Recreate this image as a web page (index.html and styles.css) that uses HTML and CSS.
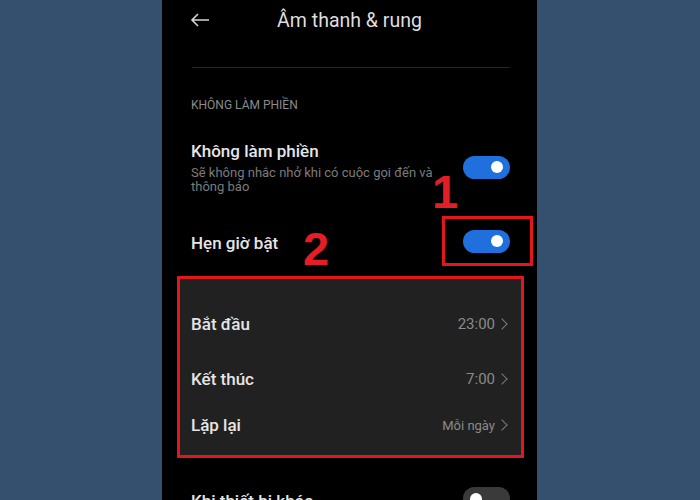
FILE: index.html
```html
<!DOCTYPE html>
<html lang="vi">

<head>
    <meta charset="UTF-8">
    <meta name="viewport" content="width=device-width, initial-scale=1.0">
    <title>Âm thanh &amp; rung</title>
    <link rel="stylesheet" href="styles.css">
</head>

<body>
    <div class="phone">
        <!-- thanh tiêu đề -->
        <div class="header">
            <span class="back">
                <svg width="20" height="14" viewBox="0 0 20 14"><path d="M19 7H2M8 1L2 7l6 6" fill="none" stroke="#d6d6d6" stroke-width="1.6"/></svg>
            </span>
            <span class="title">Âm thanh &amp; rung</span>
            <span></span>
        </div>
        <div class="divider"></div>

        <div class="label">KHÔNG LÀM PHIỀN</div>

        <div class="row row-first">
            <div class="text">
                <div class="name">Không làm phiền</div>
                <div class="desc">Sẽ không nhắc nhở khi có cuộc gọi đến và thông báo</div>
            </div>
            <span class="toggle on"></span>
        </div>

        <div class="row row-timer">
            <div class="name">Hẹn giờ bật</div>
            <span class="toggle on"></span>
        </div>

        <div class="card">
            <div class="item item-start">
                <span class="name">Bắt đầu</span>
                <span class="value">23:00 <i class="chev"></i></span>
            </div>
            <div class="item item-end">
                <span class="name">Kết thúc</span>
                <span class="value">7:00 <i class="chev"></i></span>
            </div>
            <div class="item item-repeat">
                <span class="name">Lặp lại</span>
                <span class="value">Mỗi ngày <i class="chev"></i></span>
            </div>
        </div>

        <div class="row row-lock">
            <div class="name">Khi thiết bị khóa</div>
            <span class="toggle"></span>
        </div>

        <!-- chú thích màu đỏ -->
        <span class="mark mark1">1</span>
        <span class="mark mark2">2</span>
        <span class="redbox"></span>
    </div>
</body>

</html>
```

FILE: styles.css
```css
* {
    margin: 0;
    padding: 0;
    box-sizing: border-box;
}

body {
    width: 700px;
    height: 500px;
    overflow: hidden;
    background: #34506e;
    font-family: Roboto, "Noto Sans", sans-serif;
}

.phone {
    position: relative;
    width: 375px;
    height: 500px;
    margin-left: 162px;
    background: #000;
    overflow: hidden;
}

.header {
    height: 40px;
    display: grid;
    grid-template-columns: 1fr auto 1fr;
    align-items: center;
    padding: 0 28px;
}

.back {
    display: flex;
}

.title {
    color: #dedede;
    font-size: 19.5px;
}

.divider {
    height: 1px;
    margin: 27px 27px 0 30px;
    background: #262626;
}

.label {
    margin: 29px 29px 0;
    color: #8a8a8a;
    font-size: 12px;
    line-height: 16px;
}

.row {
    display: flex;
    align-items: center;
    justify-content: space-between;
    padding: 0 27px 0 29px;
}

.name {
    color: #e6e6e6;
    font-size: 17px;
    font-weight: 500;
    line-height: 22px;
}

.desc {
    width: 256px;
    margin-top: 4px;
    color: #7c7c7c;
    font-size: 13px;
    line-height: 14px;
}

.row-first {
    margin-top: 27px;
}

.row-timer {
    height: 40px;
    margin-top: 27px;
}

.row-timer .name {
    margin-top: 4px;
}

.toggle {
    position: relative;
    width: 47px;
    height: 23px;
    border-radius: 12px;
    background: #3a3a3a;
}

.toggle::after {
    content: "";
    position: absolute;
    top: 5.5px;
    left: 7px;
    width: 12px;
    height: 12px;
    border-radius: 50%;
    background: #fff;
}

.toggle.on {
    background: #1f6fdc;
}

.toggle.on::after {
    left: auto;
    right: 7px;
}

.card {
    height: 182px;
    margin: 15px 13px 0 15px;
    padding: 23px 12px 0 11px;
    background: #212121;
    border: 3px solid #e3161c;
}

.item {
    height: 44px;
    display: flex;
    align-items: center;
    justify-content: space-between;
}

.item-end {
    margin-top: 11px;
}

.item-repeat {
    margin-top: 2px;
}

.value {
    display: flex;
    align-items: center;
    gap: 5px;
    color: #8a8a8a;
    font-size: 15px;
}

.item-repeat .value {
    font-size: 13px;
}

.chev {
    width: 8px;
    height: 8px;
    border-top: 1.3px solid #7a7a7a;
    border-right: 1.3px solid #7a7a7a;
    transform: rotate(45deg);
    margin-left: -2px;
    margin-right: 3px;
}

.row-lock {
    height: 40px;
    margin-top: 23px;
}

.row-lock .toggle {
    align-self: flex-start;
    margin-top: 6px;
}

.mark {
    position: absolute;
    color: #e41e26;
    font-family: "Liberation Sans", Arial, sans-serif;
    font-size: 47px;
    font-weight: bold;
    line-height: 1;
}

.mark1 {
    left: 270px;
    top: 168px;
}

.mark2 {
    left: 141px;
    top: 225px;
}

.redbox {
    position: absolute;
    left: 280px;
    top: 216px;
    width: 91px;
    height: 50px;
    border: 3px solid #e3161c;
}
```
